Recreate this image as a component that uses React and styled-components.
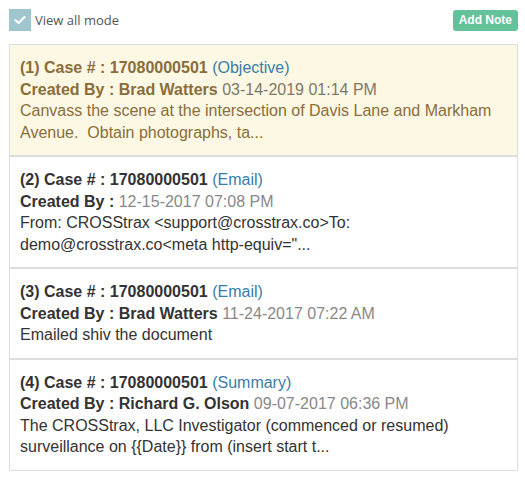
import React, { useState } from "react";
import styled, { createGlobalStyle } from "styled-components";

const notes = [
  {
    id: 1,
    type: "Objective",
    author: "Brad Watters",
    date: "03-14-2019 01:14 PM",
    text: "Canvass the scene at the intersection of Davis Lane and Markham Avenue.\u00a0 Obtain photographs, ta...",
    highlight: true,
  },
  {
    id: 2,
    type: "Email",
    author: "",
    date: "12-15-2017 07:08 PM",
    text: 'From: CROSStrax <support@crosstrax.co>To: demo@crosstrax.co<meta http-equiv="...',
  },
  {
    id: 3,
    type: "Email",
    author: "Brad Watters",
    date: "11-24-2017 07:22 AM",
    text: "Emailed shiv the document",
  },
  {
    id: 4,
    type: "Summary",
    author: "Richard G. Olson",
    date: "09-07-2017 06:36 PM",
    text: "The CROSStrax, LLC Investigator (commenced or resumed) surveillance on {{Date}} from (insert start t...",
  },
];

const GlobalStyle = createGlobalStyle`
  body {
    margin: 0;
    background: #fff;
    font-family: "Liberation Sans", Arial, sans-serif;
  }
`;

const NotesPanel = () => {
  const [viewAll, setViewAll] = useState(true);

  return (
    <Wrapper>
      <GlobalStyle />
      <TopBar>
        <CheckLabel onClick={() => setViewAll(!viewAll)}>
          <CheckBox checked={viewAll}>
            {viewAll && (
              <svg width="12" height="10" viewBox="0 0 12 10">
                <path
                  d="M1.5 5.2 L4.6 8 L10.5 2"
                  fill="none"
                  stroke="#fff"
                  strokeWidth="2.2"
                  strokeLinecap="round"
                  strokeLinejoin="round"
                />
              </svg>
            )}
          </CheckBox>
          View all mode
        </CheckLabel>
        <AddButton>Add Note</AddButton>
      </TopBar>

      <NoteList>
        {notes.map((note) => (
          <NoteItem key={note.id} highlight={note.highlight}>
            <Line>
              <strong>
                ({note.id}) Case # : 17080000501
              </strong>{" "}
              <NoteType>({note.type})</NoteType>
            </Line>
            <Line>
              <strong>Created By : {note.author}</strong>{" "}
              <NoteDate highlight={note.highlight}>{note.date}</NoteDate>
            </Line>
            <Line>{note.text}</Line>
          </NoteItem>
        ))}
      </NoteList>
    </Wrapper>
  );
};

const Wrapper = styled.div`
  padding: 9px 7px 9px 9px;
`;

const TopBar = styled.div`
  display: flex;
  justify-content: space-between;
  align-items: center;
  height: 22px;
  margin-bottom: 13px;
`;

const CheckLabel = styled.label`
  display: flex;
  align-items: center;
  gap: 4px;
  font-family: "Open Sans", sans-serif;
  font-size: 13px;
  color: #555;
  cursor: pointer;
`;

const CheckBox = styled.span`
  width: 22px;
  height: 22px;
  display: flex;
  align-items: center;
  justify-content: center;
  background: ${(props) => (props.checked ? "#9fc5cf" : "#fff")};
  border: ${(props) => (props.checked ? "none" : "1px solid #bbb")};
  box-sizing: border-box;
`;

const AddButton = styled.button`
  height: 21px;
  padding: 0 6px;
  border: none;
  border-radius: 3px;
  background: #64c29a;
  color: #fff;
  font-family: "Liberation Sans", Arial, sans-serif;
  font-weight: bold;
  font-size: 12px;
  cursor: pointer;
`;

const NoteList = styled.div`
  display: flex;
  flex-direction: column;
`;

const NoteItem = styled.div`
  border: 1px solid #ddd;
  padding: 12px 10px;
  background: ${(props) => (props.highlight ? "#fcf8e3" : "#fff")};
  color: ${(props) => (props.highlight ? "#8a6d3b" : "#333")};
  font-size: 16px;
  line-height: 21.5px;
`;

const Line = styled.div``;

const NoteType = styled.span`
  color: #3a7ca8;
`;

const NoteDate = styled.span`
  color: ${(props) => (props.highlight ? "#7f7768" : "#888")};
`;

export default NotesPanel;
